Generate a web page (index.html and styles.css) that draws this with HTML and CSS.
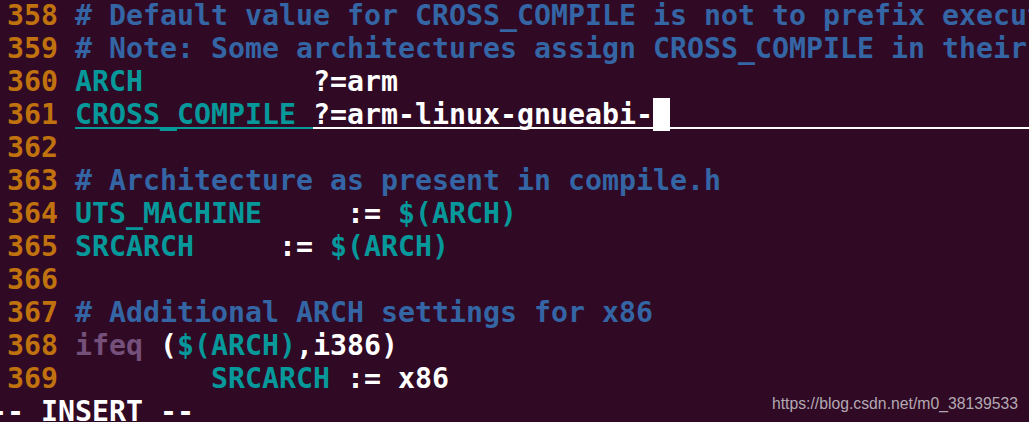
FILE: index.html
```html
<!DOCTYPE html>
<html>
<head>
<meta charset="utf-8">
<link rel="stylesheet" href="styles.css">
</head>
<body>
<div class="term">
  <div class="row"><span class="nr"> 358 </span><span class="cm"># Default value for CROSS_COMPILE is not to prefix executables</span></div>
  <div class="row"><span class="nr"> 359 </span><span class="cm"># Note: Some architectures assign CROSS_COMPILE in their arch/*/Makefile</span></div>
  <div class="row"><span class="nr"> 360 </span><span class="id">ARCH</span><span class="tx">          ?=arm</span></div>
  <div class="row cl"><span class="nr"> 361 </span><span class="id ul-teal">CROSS_COMPILE </span><span class="tx ul-white">?=arm-linux-gnueabi-</span><span class="cursor"></span><span class="fill ul-white"></span></div>
  <div class="row"><span class="nr"> 362 </span></div>
  <div class="row"><span class="nr"> 363 </span><span class="cm"># Architecture as present in compile.h</span></div>
  <div class="row"><span class="nr"> 364 </span><span class="id">UTS_MACHINE</span><span class="tx">     := </span><span class="id">$(ARCH)</span></div>
  <div class="row"><span class="nr"> 365 </span><span class="id">SRCARCH</span><span class="tx">     := </span><span class="id">$(ARCH)</span></div>
  <div class="row"><span class="nr"> 366 </span></div>
  <div class="row"><span class="nr"> 367 </span><span class="cm"># Additional ARCH settings for x86</span></div>
  <div class="row"><span class="nr"> 368 </span><span class="kw">ifeq</span><span class="tx"> (</span><span class="id">$(ARCH)</span><span class="tx">,i386)</span></div>
  <div class="row"><span class="nr"> 369 </span><span class="tx">        </span><span class="id">SRCARCH</span><span class="tx"> := x86</span></div>
  <div class="row"><span class="tx">-- INSERT --</span></div>
</div>
<div class="watermark">https://blog.csdn.net/m0_38139533</div>
</body>
</html>
```
FILE: styles.css
```css
html, body {
  margin: 0;
  padding: 0;
  width: 1029px;
  height: 422px;
  overflow: hidden;
  background: #300a24;
}

body {
  position: relative;
}

.term {
  margin-top: -1px;
  margin-left: -10px;
  width: 1039px;
  overflow: hidden;
  font-family: "DejaVu Sans Mono", monospace;
  font-weight: bold;
  font-size: 28.24px;
  line-height: 33px;
  color: #ffffff;
}

.row {
  display: flex;
  height: 33px;
  white-space: pre;
}

.nr { color: #c0720f; }
.cm { color: #3465a4; }
.id { color: #06989a; }
.kw { color: #75507b; }
.tx { color: #ffffff; }

.ul-teal {
  background: linear-gradient(#06989a, #06989a) 0 29px / 100% 2px no-repeat;
}

.ul-white {
  background: linear-gradient(#ffffff, #ffffff) 0 29px / 100% 2px no-repeat;
}

.cursor {
  width: 17px;
  height: 33px;
  background: #ffffff;
}

.fill {
  flex: 1;
}

.watermark {
  position: absolute;
  right: 11px;
  bottom: 9px;
  font-family: "Liberation Sans", Arial, sans-serif;
  font-size: 15.75px;
  color: #b3a8b2;
}
```
